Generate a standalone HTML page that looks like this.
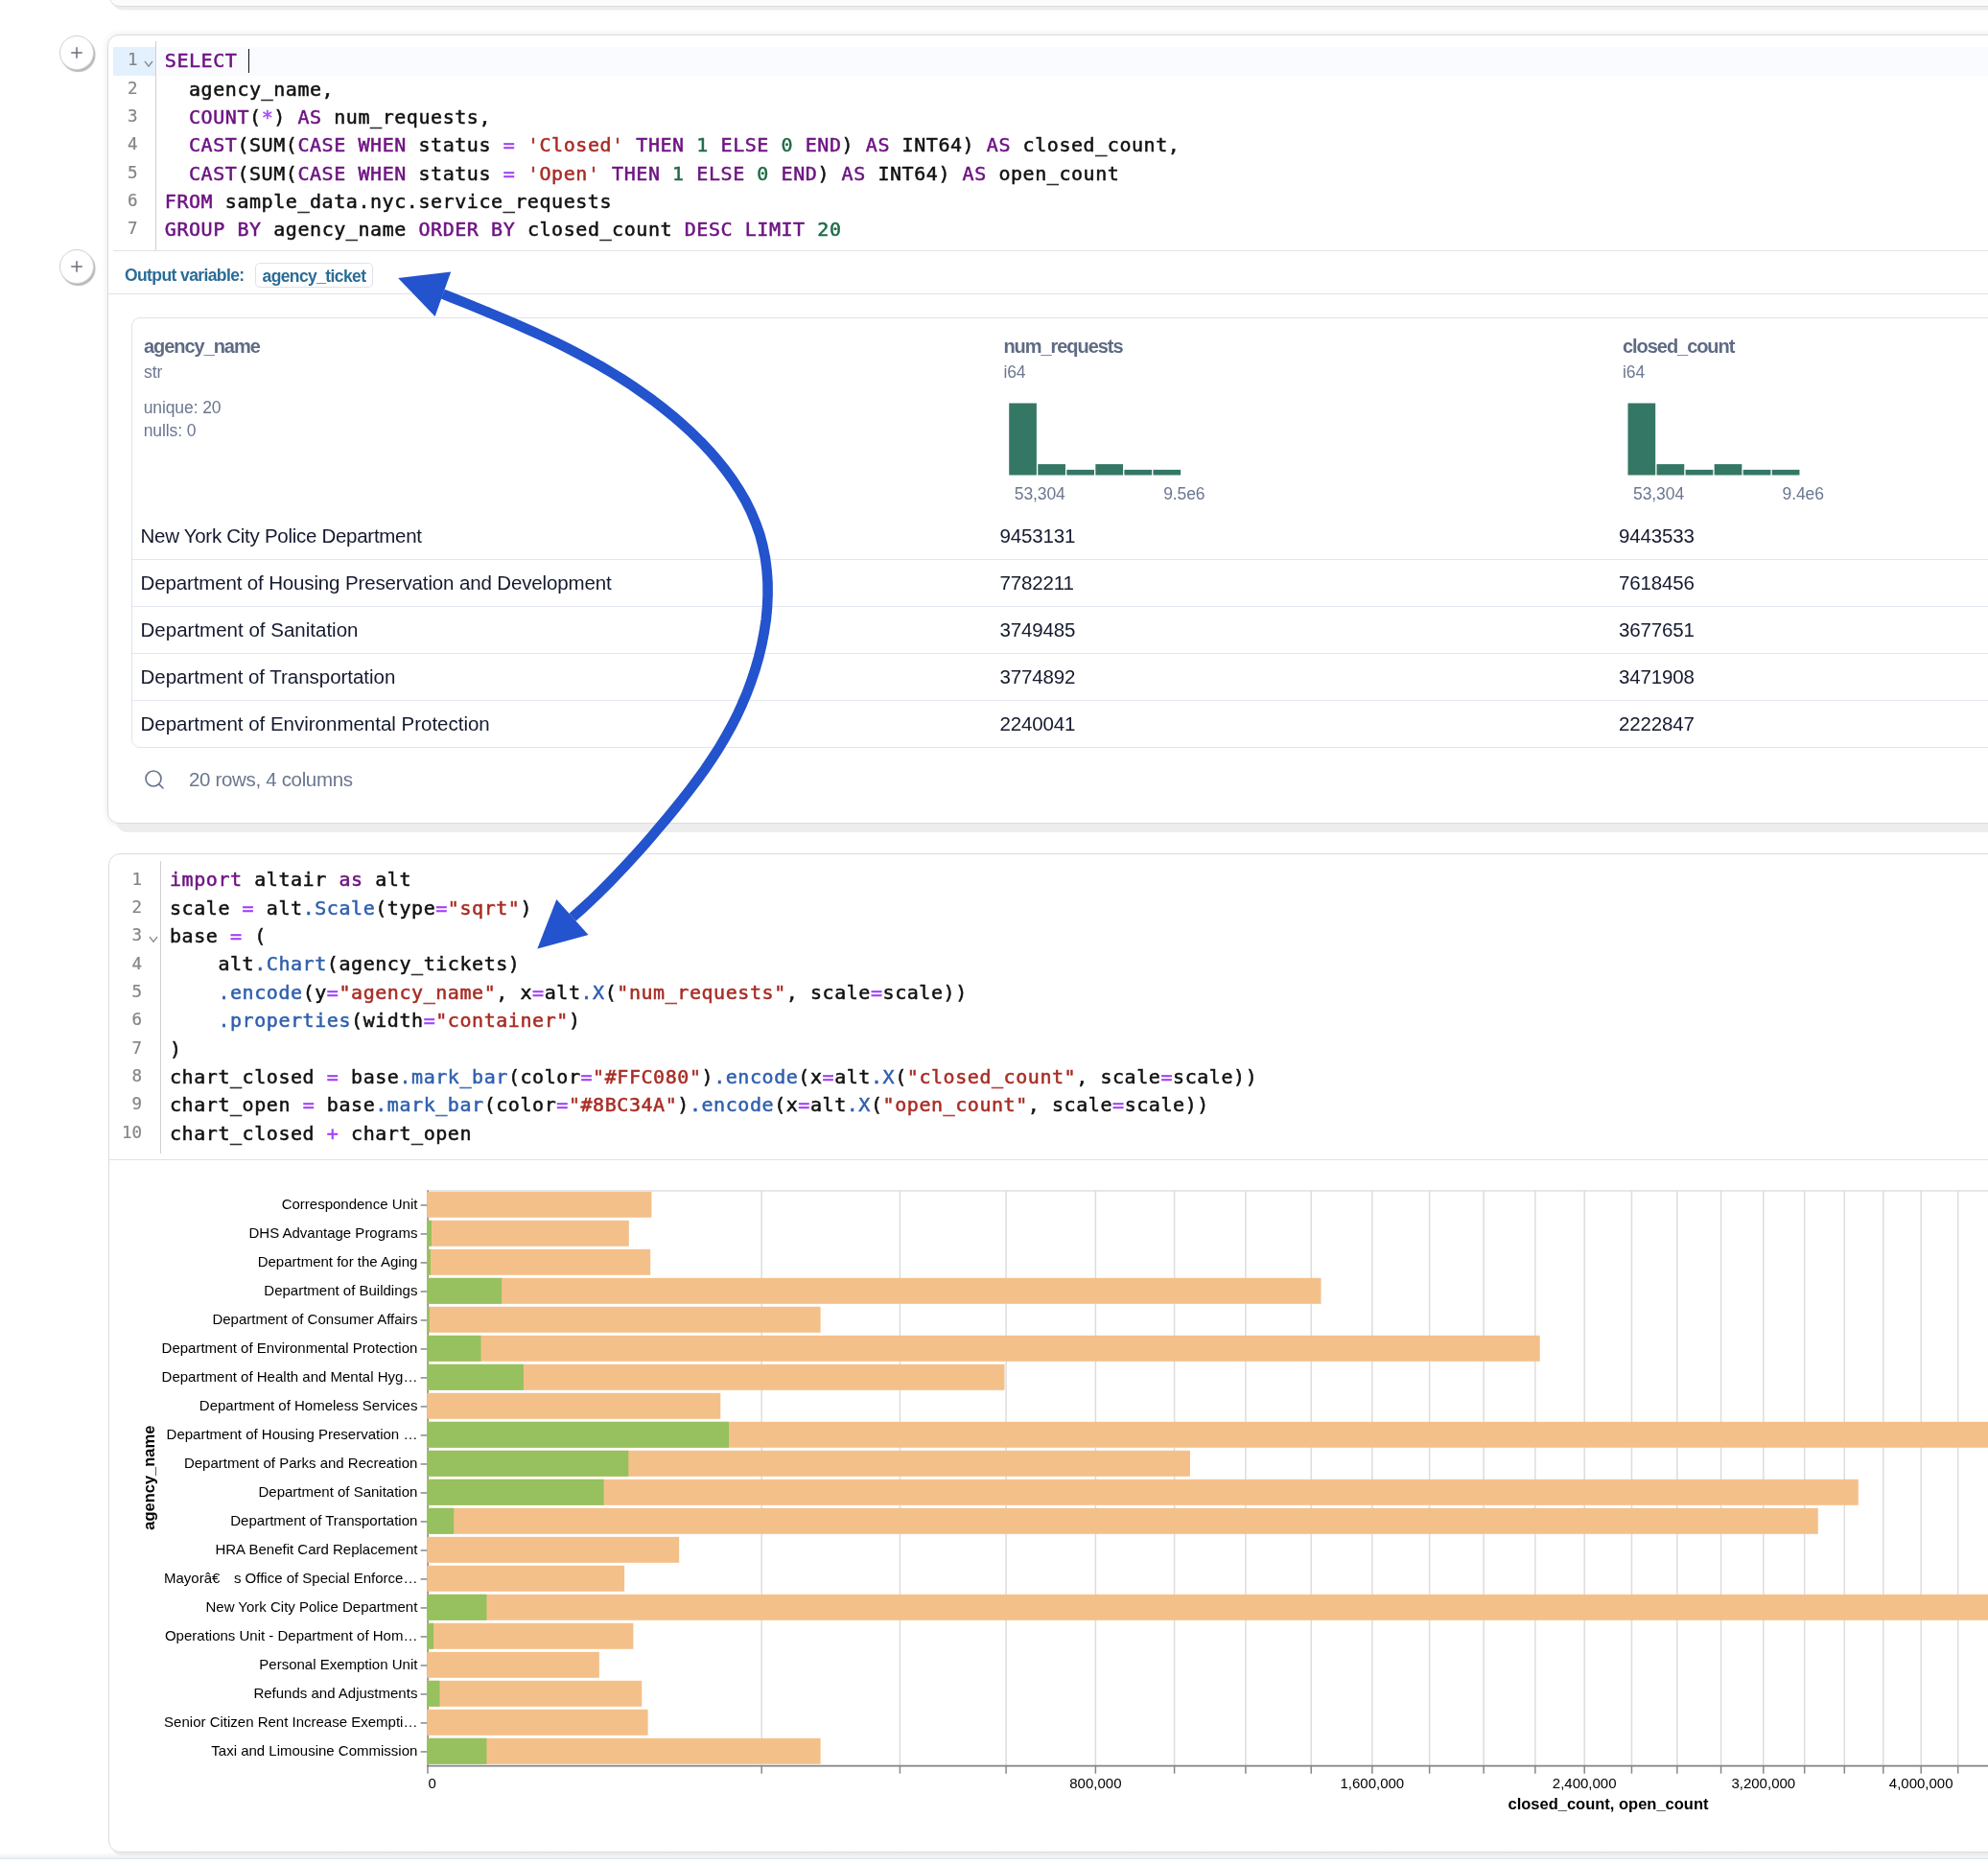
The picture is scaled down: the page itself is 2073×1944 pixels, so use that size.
<!DOCTYPE html>
<html><head><meta charset="utf-8"><title>notebook</title>
<style>
html,body{margin:0;padding:0;background:#fff;}
body{width:2073px;height:1944px;position:relative;overflow:hidden;font-family:"Liberation Sans", sans-serif;}
.abs{position:absolute;}
div{box-sizing:border-box;}
.cell{position:absolute;background:#fff;border:1px solid #dcdcdc;border-radius:12px;}
.ln{position:absolute;text-align:right;font-family:"DejaVu Sans Mono", "Liberation Mono", monospace;font-size:17.5px;line-height:29.35px;height:29.35px;color:#858585;margin-top:-0.9px;-webkit-text-stroke:0.2px;white-space:pre;}
.cl{position:absolute;font-family:"DejaVu Sans Mono", "Liberation Mono", monospace;font-size:20px;letter-spacing:0.56px;line-height:29.35px;height:29.35px;color:#111;white-space:pre;-webkit-text-stroke:0.5px;}
.k{color:#6e1483;}
.o{color:#a545f8;}
.s{color:#a82c24;}
.n{color:#1e6b46;}
.f{color:#2f5fae;}
.hline{position:absolute;height:1px;background:#e2e2e2;}
.plus{position:absolute;width:36px;height:36px;border-radius:50%;border:1px solid #cfcfd6;background:#fff;box-shadow:1.5px 2px 1px 0 #b9b9b9;}
.pt{position:absolute;white-space:pre;font-family:"Liberation Sans", sans-serif;}
.row{position:absolute;font-size:20.5px;color:#141a2e;white-space:pre;line-height:30px;height:30px;letter-spacing:-0.15px;}
.hd{position:absolute;font-weight:bold;font-size:20px;color:#5f6b85;white-space:pre;line-height:26px;letter-spacing:-1.05px;}
.sm{position:absolute;font-size:17.5px;color:#6b7790;white-space:pre;line-height:22px;letter-spacing:-0.1px;}
</style></head><body><div id="root" style="position:absolute;left:0;top:0;width:2073px;height:1944px;will-change:transform;">

<div class="cell" style="left:113px;top:-60px;width:2200px;height:67px;background:#fcfcfc;box-shadow:3px 3.5px 0 0 #ececec;"></div>
<div class="cell" style="left:112.2px;top:36.3px;width:2200px;height:822.5px;box-shadow:9px 9px 0 0 #ededed, 0 0 7px 0 rgba(0,0,0,0.10);"></div>
<div class="abs" style="left:118px;top:49.2px;width:44.5px;height:29.4px;background:#e3f0fd;"></div>
<div class="abs" style="left:163.5px;top:49.2px;width:2000px;height:29.4px;background:#fafbfe;"></div>
<div class="abs" style="left:162px;top:43.2px;width:1.2px;height:218px;background:#cfcfcf;"></div>
<div class="ln" style="left:83.5px;top:49.20px;width:60px">1</div><svg class="abs" style="left:150px;top:61.70px" width="10" height="10" viewBox="0 0 10 10"><path d="M1 2 L5 7.2 L9 2" fill="none" stroke="#8a8a8a" stroke-width="1.3"/></svg><div class="cl" style="left:171.8px;top:49.20px"><span class="k">SELECT</span><span class="t"> </span></div><div class="ln" style="left:83.5px;top:78.55px;width:60px">2</div><div class="cl" style="left:171.8px;top:78.55px"><span class="t">  agency_name,</span></div><div class="ln" style="left:83.5px;top:107.90px;width:60px">3</div><div class="cl" style="left:171.8px;top:107.90px"><span class="t">  </span><span class="k">COUNT</span><span class="t">(</span><span class="o">*</span><span class="t">) </span><span class="k">AS</span><span class="t"> num_requests,</span></div><div class="ln" style="left:83.5px;top:137.25px;width:60px">4</div><div class="cl" style="left:171.8px;top:137.25px"><span class="t">  </span><span class="k">CAST</span><span class="t">(SUM(</span><span class="k">CASE</span><span class="t"> </span><span class="k">WHEN</span><span class="t"> status </span><span class="o">=</span><span class="t"> </span><span class="s">&#x27;Closed&#x27;</span><span class="t"> </span><span class="k">THEN</span><span class="t"> </span><span class="n">1</span><span class="t"> </span><span class="k">ELSE</span><span class="t"> </span><span class="n">0</span><span class="t"> </span><span class="k">END</span><span class="t">) </span><span class="k">AS</span><span class="t"> INT64) </span><span class="k">AS</span><span class="t"> closed_count,</span></div><div class="ln" style="left:83.5px;top:166.60px;width:60px">5</div><div class="cl" style="left:171.8px;top:166.60px"><span class="t">  </span><span class="k">CAST</span><span class="t">(SUM(</span><span class="k">CASE</span><span class="t"> </span><span class="k">WHEN</span><span class="t"> status </span><span class="o">=</span><span class="t"> </span><span class="s">&#x27;Open&#x27;</span><span class="t"> </span><span class="k">THEN</span><span class="t"> </span><span class="n">1</span><span class="t"> </span><span class="k">ELSE</span><span class="t"> </span><span class="n">0</span><span class="t"> </span><span class="k">END</span><span class="t">) </span><span class="k">AS</span><span class="t"> INT64) </span><span class="k">AS</span><span class="t"> open_count</span></div><div class="ln" style="left:83.5px;top:195.95px;width:60px">6</div><div class="cl" style="left:171.8px;top:195.95px"><span class="k">FROM</span><span class="t"> sample_data.nyc.service_requests</span></div><div class="ln" style="left:83.5px;top:225.30px;width:60px">7</div><div class="cl" style="left:171.8px;top:225.30px"><span class="k">GROUP</span><span class="t"> </span><span class="k">BY</span><span class="t"> agency_name </span><span class="k">ORDER</span><span class="t"> </span><span class="k">BY</span><span class="t"> closed_count </span><span class="k">DESC</span><span class="t"> </span><span class="k">LIMIT</span><span class="t"> </span><span class="n">20</span></div>
<div class="abs" style="left:259px;top:50.5px;width:1.3px;height:25px;background:#111;"></div>
<div class="hline" style="left:118px;top:260.8px;width:2000px;"></div>
<div class="pt" style="left:130px;top:274px;font-size:17.5px;font-weight:bold;color:#2b6c96;line-height:26px;letter-spacing:-0.6px;">Output variable:</div>
<div class="abs" style="left:266px;top:274px;width:123px;height:25.5px;border:1px solid #dde2ec;border-radius:5px;background:#fff;"><div class="abs" style="left:0;top:0;width:115px;height:23.5px;overflow:hidden;"><div class="pt" style="left:6.5px;top:0.5px;font-size:17.5px;font-weight:bold;color:#2b6c96;line-height:24px;letter-spacing:-0.6px;">agency_tickets</div></div></div>
<div class="hline" style="left:113px;top:305.8px;width:2000px;"></div>
<div class="plus" style="left:62.3px;top:37px;"></div>
<svg class="abs" style="left:72.3px;top:47px" width="16" height="16" viewBox="0 0 16 16"><path d="M2.2 8 H13.8 M8 2.2 V13.8" stroke="#6a6f78" stroke-width="1.5" fill="none"/></svg>
<div class="plus" style="left:62.3px;top:260px;"></div>
<svg class="abs" style="left:72.3px;top:270px" width="16" height="16" viewBox="0 0 16 16"><path d="M2.2 8 H13.8 M8 2.2 V13.8" stroke="#6a6f78" stroke-width="1.5" fill="none"/></svg>
<div class="abs" style="left:137px;top:331px;width:2100px;height:449px;border:1px solid #dfe3ec;border-radius:9px;background:#fff;"></div>
<div class="hd" style="left:150px;top:348px;">agency_name</div>
<div class="sm" style="left:150px;top:377px;">str</div>
<div class="sm" style="left:149.7px;top:414px;">unique: 20</div>
<div class="sm" style="left:149.7px;top:437.5px;">nulls: 0</div>
<div class="row" style="left:146.5px;top:543.6px;letter-spacing:-0.28px;">New York City Police Department</div>
<div class="row" style="left:1042.5px;top:543.6px;">9453131</div>
<div class="row" style="left:1688px;top:543.6px;">9443533</div>
<div class="hline" style="left:138px;top:582.6px;width:2000px;background:#e1e6ef;"></div>
<div class="row" style="left:146.5px;top:592.6px;letter-spacing:-0.14px;">Department of Housing Preservation and Development</div>
<div class="row" style="left:1042.5px;top:592.6px;">7782211</div>
<div class="row" style="left:1688px;top:592.6px;">7618456</div>
<div class="hline" style="left:138px;top:631.6px;width:2000px;background:#e1e6ef;"></div>
<div class="row" style="left:146.5px;top:641.6px;letter-spacing:0.01px;">Department of Sanitation</div>
<div class="row" style="left:1042.5px;top:641.6px;">3749485</div>
<div class="row" style="left:1688px;top:641.6px;">3677651</div>
<div class="hline" style="left:138px;top:680.6px;width:2000px;background:#e1e6ef;"></div>
<div class="row" style="left:146.5px;top:690.6px;letter-spacing:-0.03px;">Department of Transportation</div>
<div class="row" style="left:1042.5px;top:690.6px;">3774892</div>
<div class="row" style="left:1688px;top:690.6px;">3471908</div>
<div class="hline" style="left:138px;top:729.6px;width:2000px;background:#e1e6ef;"></div>
<div class="row" style="left:146.5px;top:739.6px;letter-spacing:-0.01px;">Department of Environmental Protection</div>
<div class="row" style="left:1042.5px;top:739.6px;">2240041</div>
<div class="row" style="left:1688px;top:739.6px;">2222847</div>
<div class="hd" style="left:1046.4px;top:348px;">num_requests</div>
<div class="sm" style="left:1046.4px;top:377px;">i64</div>
<svg class="abs" style="left:0;top:400px" width="2073" height="110" viewBox="0 400 2073 110"><rect x="1052.20" y="420.50" width="28.7" height="75" fill="#347765"/><rect x="1082.25" y="484.10" width="28.7" height="11.4" fill="#347765"/><rect x="1112.30" y="489.90" width="28.7" height="5.6" fill="#347765"/><rect x="1142.35" y="484.10" width="28.7" height="11.4" fill="#347765"/><rect x="1172.40" y="489.90" width="28.7" height="5.6" fill="#347765"/><rect x="1202.45" y="489.90" width="28.7" height="5.6" fill="#347765"/></svg><div class="sm" style="left:1057.8px;top:503.5px;">53,304</div><div class="sm" style="left:1213.2px;top:503.5px;">9.5e6</div>
<div class="hd" style="left:1692px;top:348px;">closed_count</div>
<div class="sm" style="left:1692px;top:377px;">i64</div>
<svg class="abs" style="left:0;top:400px" width="2073" height="110" viewBox="0 400 2073 110"><rect x="1697.50" y="420.50" width="28.7" height="75" fill="#347765"/><rect x="1727.55" y="484.10" width="28.7" height="11.4" fill="#347765"/><rect x="1757.60" y="489.90" width="28.7" height="5.6" fill="#347765"/><rect x="1787.65" y="484.10" width="28.7" height="11.4" fill="#347765"/><rect x="1817.70" y="489.90" width="28.7" height="5.6" fill="#347765"/><rect x="1847.75" y="489.90" width="28.7" height="5.6" fill="#347765"/></svg><div class="sm" style="left:1703.1px;top:503.5px;">53,304</div><div class="sm" style="left:1858.5px;top:503.5px;">9.4e6</div>
<svg class="abs" style="left:149px;top:800.5px" width="24" height="24" viewBox="0 0 24 24"><circle cx="11" cy="11" r="8" fill="none" stroke="#6b7790" stroke-width="1.7"/><path d="M16.8 16.8 L21 21" stroke="#6b7790" stroke-width="1.7" stroke-linecap="round"/></svg>
<div class="pt" style="left:197px;top:798px;font-size:20.5px;color:#6b7790;line-height:30px;letter-spacing:-0.33px;">20 rows, 4 columns</div>
<div class="cell" style="left:113px;top:890.2px;width:2200px;height:1041.5px;box-shadow:3px 3.5px 0 0 #ececec;"></div>
<div class="abs" style="left:167px;top:897.5px;width:1.2px;height:305px;background:#cfcfcf;"></div>
<div class="ln" style="left:88px;top:903.40px;width:60px">1</div><div class="cl" style="left:177.0px;top:903.40px"><span class="k">import</span><span class="t"> altair </span><span class="k">as</span><span class="t"> alt</span></div><div class="ln" style="left:88px;top:932.75px;width:60px">2</div><div class="cl" style="left:177.0px;top:932.75px"><span class="t">scale </span><span class="o">=</span><span class="t"> alt</span><span class="f">.Scale</span><span class="t">(type</span><span class="o">=</span><span class="s">&quot;sqrt&quot;</span><span class="t">)</span></div><div class="ln" style="left:88px;top:962.10px;width:60px">3</div><svg class="abs" style="left:155px;top:974.60px" width="10" height="10" viewBox="0 0 10 10"><path d="M1 2 L5 7.2 L9 2" fill="none" stroke="#8a8a8a" stroke-width="1.3"/></svg><div class="cl" style="left:177.0px;top:962.10px"><span class="t">base </span><span class="o">=</span><span class="t"> (</span></div><div class="ln" style="left:88px;top:991.45px;width:60px">4</div><div class="cl" style="left:177.0px;top:991.45px"><span class="t">    alt</span><span class="f">.Chart</span><span class="t">(agency_tickets)</span></div><div class="ln" style="left:88px;top:1020.80px;width:60px">5</div><div class="cl" style="left:177.0px;top:1020.80px"><span class="t">    </span><span class="f">.encode</span><span class="t">(y</span><span class="o">=</span><span class="s">&quot;agency_name&quot;</span><span class="t">, x</span><span class="o">=</span><span class="t">alt</span><span class="f">.X</span><span class="t">(</span><span class="s">&quot;num_requests&quot;</span><span class="t">, scale</span><span class="o">=</span><span class="t">scale))</span></div><div class="ln" style="left:88px;top:1050.15px;width:60px">6</div><div class="cl" style="left:177.0px;top:1050.15px"><span class="t">    </span><span class="f">.properties</span><span class="t">(width</span><span class="o">=</span><span class="s">&quot;container&quot;</span><span class="t">)</span></div><div class="ln" style="left:88px;top:1079.50px;width:60px">7</div><div class="cl" style="left:177.0px;top:1079.50px"><span class="t">)</span></div><div class="ln" style="left:88px;top:1108.85px;width:60px">8</div><div class="cl" style="left:177.0px;top:1108.85px"><span class="t">chart_closed </span><span class="o">=</span><span class="t"> base</span><span class="f">.mark_bar</span><span class="t">(color</span><span class="o">=</span><span class="s">&quot;#FFC080&quot;</span><span class="t">)</span><span class="f">.encode</span><span class="t">(x</span><span class="o">=</span><span class="t">alt</span><span class="f">.X</span><span class="t">(</span><span class="s">&quot;closed_count&quot;</span><span class="t">, scale</span><span class="o">=</span><span class="t">scale))</span></div><div class="ln" style="left:88px;top:1138.20px;width:60px">9</div><div class="cl" style="left:177.0px;top:1138.20px"><span class="t">chart_open </span><span class="o">=</span><span class="t"> base</span><span class="f">.mark_bar</span><span class="t">(color</span><span class="o">=</span><span class="s">&quot;#8BC34A&quot;</span><span class="t">)</span><span class="f">.encode</span><span class="t">(x</span><span class="o">=</span><span class="t">alt</span><span class="f">.X</span><span class="t">(</span><span class="s">&quot;open_count&quot;</span><span class="t">, scale</span><span class="o">=</span><span class="t">scale))</span></div><div class="ln" style="left:88px;top:1167.55px;width:60px">10</div><div class="cl" style="left:177.0px;top:1167.55px"><span class="t">chart_closed </span><span class="o">+</span><span class="t"> chart_open</span></div>
<div class="hline" style="left:114px;top:1209px;width:2000px;"></div>
<svg class="abs" style="left:0;top:0" width="2073" height="1944" viewBox="0 0 2073 1944" font-family='"Liberation Sans", sans-serif'><rect x="446.0" y="1241.95" width="2465" height="600" fill="none" stroke="#ddd" stroke-width="1.4"/><line x1="794.20" x2="794.20" y1="1241.95" y2="1841.95" stroke="#ddd" stroke-width="1.5"/><line x1="938.43" x2="938.43" y1="1241.95" y2="1841.95" stroke="#ddd" stroke-width="1.5"/><line x1="1049.10" x2="1049.10" y1="1241.95" y2="1841.95" stroke="#ddd" stroke-width="1.5"/><line x1="1142.40" x2="1142.40" y1="1241.95" y2="1841.95" stroke="#ddd" stroke-width="1.5"/><line x1="1224.60" x2="1224.60" y1="1241.95" y2="1841.95" stroke="#ddd" stroke-width="1.5"/><line x1="1298.91" x2="1298.91" y1="1241.95" y2="1841.95" stroke="#ddd" stroke-width="1.5"/><line x1="1367.25" x2="1367.25" y1="1241.95" y2="1841.95" stroke="#ddd" stroke-width="1.5"/><line x1="1430.86" x2="1430.86" y1="1241.95" y2="1841.95" stroke="#ddd" stroke-width="1.5"/><line x1="1490.60" x2="1490.60" y1="1241.95" y2="1841.95" stroke="#ddd" stroke-width="1.5"/><line x1="1547.11" x2="1547.11" y1="1241.95" y2="1841.95" stroke="#ddd" stroke-width="1.5"/><line x1="1600.85" x2="1600.85" y1="1241.95" y2="1841.95" stroke="#ddd" stroke-width="1.5"/><line x1="1652.20" x2="1652.20" y1="1241.95" y2="1841.95" stroke="#ddd" stroke-width="1.5"/><line x1="1701.45" x2="1701.45" y1="1241.95" y2="1841.95" stroke="#ddd" stroke-width="1.5"/><line x1="1748.85" x2="1748.85" y1="1241.95" y2="1841.95" stroke="#ddd" stroke-width="1.5"/><line x1="1794.57" x2="1794.57" y1="1241.95" y2="1841.95" stroke="#ddd" stroke-width="1.5"/><line x1="1838.80" x2="1838.80" y1="1241.95" y2="1841.95" stroke="#ddd" stroke-width="1.5"/><line x1="1881.67" x2="1881.67" y1="1241.95" y2="1841.95" stroke="#ddd" stroke-width="1.5"/><line x1="1923.29" x2="1923.29" y1="1241.95" y2="1841.95" stroke="#ddd" stroke-width="1.5"/><line x1="1963.77" x2="1963.77" y1="1241.95" y2="1841.95" stroke="#ddd" stroke-width="1.5"/><line x1="2003.20" x2="2003.20" y1="1241.95" y2="1841.95" stroke="#ddd" stroke-width="1.5"/><line x1="2041.66" x2="2041.66" y1="1241.95" y2="1841.95" stroke="#ddd" stroke-width="1.5"/><line x1="2079.21" x2="2079.21" y1="1241.95" y2="1841.95" stroke="#ddd" stroke-width="1.5"/><line x1="446.2" x2="446.2" y1="1241.2" y2="1842.7" stroke="#888" stroke-width="1.5"/><rect x="445.2" y="1242.80" width="234.20" height="27" fill="#f4c08a"/><line x1="438.59999999999997" x2="445.2" y1="1256.95" y2="1256.95" stroke="#888" stroke-width="1.5"/><text x="435.4" y="1260.95" font-size="15" text-anchor="end" fill="#000">Correspondence Unit</text><rect x="445.2" y="1272.80" width="210.60" height="27" fill="#f4c08a"/><rect x="445.2" y="1272.80" width="4.70" height="27" fill="#96c15e"/><line x1="438.59999999999997" x2="445.2" y1="1286.95" y2="1286.95" stroke="#888" stroke-width="1.5"/><text x="435.4" y="1290.95" font-size="15" text-anchor="end" fill="#000">DHS Advantage Programs</text><rect x="445.2" y="1302.80" width="233.00" height="27" fill="#f4c08a"/><rect x="445.2" y="1302.80" width="3.80" height="27" fill="#96c15e"/><line x1="438.59999999999997" x2="445.2" y1="1316.95" y2="1316.95" stroke="#888" stroke-width="1.5"/><text x="435.4" y="1320.95" font-size="15" text-anchor="end" fill="#000">Department for the Aging</text><rect x="445.2" y="1332.80" width="932.30" height="27" fill="#f4c08a"/><rect x="445.2" y="1332.80" width="77.90" height="27" fill="#96c15e"/><line x1="438.59999999999997" x2="445.2" y1="1346.95" y2="1346.95" stroke="#888" stroke-width="1.5"/><text x="435.4" y="1350.95" font-size="15" text-anchor="end" fill="#000">Department of Buildings</text><rect x="445.2" y="1362.80" width="410.40" height="27" fill="#f4c08a"/><rect x="445.2" y="1362.80" width="2.70" height="27" fill="#96c15e"/><line x1="438.59999999999997" x2="445.2" y1="1376.95" y2="1376.95" stroke="#888" stroke-width="1.5"/><text x="435.4" y="1380.95" font-size="15" text-anchor="end" fill="#000">Department of Consumer Affairs</text><rect x="445.2" y="1392.80" width="1160.50" height="27" fill="#f4c08a"/><rect x="445.2" y="1392.80" width="56.30" height="27" fill="#96c15e"/><line x1="438.59999999999997" x2="445.2" y1="1406.95" y2="1406.95" stroke="#888" stroke-width="1.5"/><text x="435.4" y="1410.95" font-size="15" text-anchor="end" fill="#000">Department of Environmental Protection</text><rect x="445.2" y="1422.80" width="602.30" height="27" fill="#f4c08a"/><rect x="445.2" y="1422.80" width="100.70" height="27" fill="#96c15e"/><line x1="438.59999999999997" x2="445.2" y1="1436.95" y2="1436.95" stroke="#888" stroke-width="1.5"/><text x="435.4" y="1440.95" font-size="15" text-anchor="end" fill="#000">Department of Health and Mental Hyg…</text><rect x="445.2" y="1452.80" width="306.10" height="27" fill="#f4c08a"/><line x1="438.59999999999997" x2="445.2" y1="1466.95" y2="1466.95" stroke="#888" stroke-width="1.5"/><text x="435.4" y="1470.95" font-size="15" text-anchor="end" fill="#000">Department of Homeless Services</text><rect x="445.2" y="1482.80" width="1934.80" height="27" fill="#f4c08a"/><rect x="445.2" y="1482.80" width="314.90" height="27" fill="#96c15e"/><line x1="438.59999999999997" x2="445.2" y1="1496.95" y2="1496.95" stroke="#888" stroke-width="1.5"/><text x="435.4" y="1500.95" font-size="15" text-anchor="end" fill="#000">Department of Housing Preservation …</text><rect x="445.2" y="1512.80" width="795.80" height="27" fill="#f4c08a"/><rect x="445.2" y="1512.80" width="210.10" height="27" fill="#96c15e"/><line x1="438.59999999999997" x2="445.2" y1="1526.95" y2="1526.95" stroke="#888" stroke-width="1.5"/><text x="435.4" y="1530.95" font-size="15" text-anchor="end" fill="#000">Department of Parks and Recreation</text><rect x="445.2" y="1542.80" width="1492.60" height="27" fill="#f4c08a"/><rect x="445.2" y="1542.80" width="184.40" height="27" fill="#96c15e"/><line x1="438.59999999999997" x2="445.2" y1="1556.95" y2="1556.95" stroke="#888" stroke-width="1.5"/><text x="435.4" y="1560.95" font-size="15" text-anchor="end" fill="#000">Department of Sanitation</text><rect x="445.2" y="1572.80" width="1450.60" height="27" fill="#f4c08a"/><rect x="445.2" y="1572.80" width="28.00" height="27" fill="#96c15e"/><line x1="438.59999999999997" x2="445.2" y1="1586.95" y2="1586.95" stroke="#888" stroke-width="1.5"/><text x="435.4" y="1590.95" font-size="15" text-anchor="end" fill="#000">Department of Transportation</text><rect x="445.2" y="1602.80" width="263.00" height="27" fill="#f4c08a"/><line x1="438.59999999999997" x2="445.2" y1="1616.95" y2="1616.95" stroke="#888" stroke-width="1.5"/><text x="435.4" y="1620.95" font-size="15" text-anchor="end" fill="#000">HRA Benefit Card Replacement</text><rect x="445.2" y="1632.80" width="205.90" height="27" fill="#f4c08a"/><line x1="438.59999999999997" x2="445.2" y1="1646.95" y2="1646.95" stroke="#888" stroke-width="1.5"/><text x="435.4" y="1650.95" font-size="15" text-anchor="end" fill="#000">Mayorâ€<tspan dx="14.6">s Office of Special Enforce…</tspan></text><rect x="445.2" y="1662.80" width="2394.80" height="27" fill="#f4c08a"/><rect x="445.2" y="1662.80" width="62.30" height="27" fill="#96c15e"/><line x1="438.59999999999997" x2="445.2" y1="1676.95" y2="1676.95" stroke="#888" stroke-width="1.5"/><text x="435.4" y="1680.95" font-size="15" text-anchor="end" fill="#000">New York City Police Department</text><rect x="445.2" y="1692.80" width="215.20" height="27" fill="#f4c08a"/><rect x="445.2" y="1692.80" width="6.90" height="27" fill="#96c15e"/><line x1="438.59999999999997" x2="445.2" y1="1706.95" y2="1706.95" stroke="#888" stroke-width="1.5"/><text x="435.4" y="1710.95" font-size="15" text-anchor="end" fill="#000">Operations Unit - Department of Hom…</text><rect x="445.2" y="1722.80" width="179.70" height="27" fill="#f4c08a"/><line x1="438.59999999999997" x2="445.2" y1="1736.95" y2="1736.95" stroke="#888" stroke-width="1.5"/><text x="435.4" y="1740.95" font-size="15" text-anchor="end" fill="#000">Personal Exemption Unit</text><rect x="445.2" y="1752.80" width="224.10" height="27" fill="#f4c08a"/><rect x="445.2" y="1752.80" width="13.30" height="27" fill="#96c15e"/><line x1="438.59999999999997" x2="445.2" y1="1766.95" y2="1766.95" stroke="#888" stroke-width="1.5"/><text x="435.4" y="1770.95" font-size="15" text-anchor="end" fill="#000">Refunds and Adjustments</text><rect x="445.2" y="1782.80" width="230.40" height="27" fill="#f4c08a"/><line x1="438.59999999999997" x2="445.2" y1="1796.95" y2="1796.95" stroke="#888" stroke-width="1.5"/><text x="435.4" y="1800.95" font-size="15" text-anchor="end" fill="#000">Senior Citizen Rent Increase Exempti…</text><rect x="445.2" y="1812.80" width="410.40" height="27" fill="#f4c08a"/><rect x="445.2" y="1812.80" width="62.30" height="27" fill="#96c15e"/><line x1="438.59999999999997" x2="445.2" y1="1826.95" y2="1826.95" stroke="#888" stroke-width="1.5"/><text x="435.4" y="1830.95" font-size="15" text-anchor="end" fill="#000">Taxi and Limousine Commission</text><line x1="445.2" x2="2100" y1="1841.7" y2="1841.7" stroke="#888" stroke-width="1.7"/><line x1="446.00" x2="446.00" y1="1841.2" y2="1849.7" stroke="#888" stroke-width="1.5"/><line x1="794.20" x2="794.20" y1="1841.2" y2="1849.7" stroke="#888" stroke-width="1.5"/><line x1="938.43" x2="938.43" y1="1841.2" y2="1849.7" stroke="#888" stroke-width="1.5"/><line x1="1049.10" x2="1049.10" y1="1841.2" y2="1849.7" stroke="#888" stroke-width="1.5"/><line x1="1142.40" x2="1142.40" y1="1841.2" y2="1849.7" stroke="#888" stroke-width="1.5"/><line x1="1224.60" x2="1224.60" y1="1841.2" y2="1849.7" stroke="#888" stroke-width="1.5"/><line x1="1298.91" x2="1298.91" y1="1841.2" y2="1849.7" stroke="#888" stroke-width="1.5"/><line x1="1367.25" x2="1367.25" y1="1841.2" y2="1849.7" stroke="#888" stroke-width="1.5"/><line x1="1430.86" x2="1430.86" y1="1841.2" y2="1849.7" stroke="#888" stroke-width="1.5"/><line x1="1490.60" x2="1490.60" y1="1841.2" y2="1849.7" stroke="#888" stroke-width="1.5"/><line x1="1547.11" x2="1547.11" y1="1841.2" y2="1849.7" stroke="#888" stroke-width="1.5"/><line x1="1600.85" x2="1600.85" y1="1841.2" y2="1849.7" stroke="#888" stroke-width="1.5"/><line x1="1652.20" x2="1652.20" y1="1841.2" y2="1849.7" stroke="#888" stroke-width="1.5"/><line x1="1701.45" x2="1701.45" y1="1841.2" y2="1849.7" stroke="#888" stroke-width="1.5"/><line x1="1748.85" x2="1748.85" y1="1841.2" y2="1849.7" stroke="#888" stroke-width="1.5"/><line x1="1794.57" x2="1794.57" y1="1841.2" y2="1849.7" stroke="#888" stroke-width="1.5"/><line x1="1838.80" x2="1838.80" y1="1841.2" y2="1849.7" stroke="#888" stroke-width="1.5"/><line x1="1881.67" x2="1881.67" y1="1841.2" y2="1849.7" stroke="#888" stroke-width="1.5"/><line x1="1923.29" x2="1923.29" y1="1841.2" y2="1849.7" stroke="#888" stroke-width="1.5"/><line x1="1963.77" x2="1963.77" y1="1841.2" y2="1849.7" stroke="#888" stroke-width="1.5"/><line x1="2003.20" x2="2003.20" y1="1841.2" y2="1849.7" stroke="#888" stroke-width="1.5"/><line x1="2041.66" x2="2041.66" y1="1841.2" y2="1849.7" stroke="#888" stroke-width="1.5"/><line x1="2079.21" x2="2079.21" y1="1841.2" y2="1849.7" stroke="#888" stroke-width="1.5"/><text x="446.4" y="1864.8" font-size="15" text-anchor="start" fill="#000">0</text><text x="1142.40" y="1864.8" font-size="15" text-anchor="middle" fill="#000">800,000</text><text x="1430.86" y="1864.8" font-size="15" text-anchor="middle" fill="#000">1,600,000</text><text x="1652.20" y="1864.8" font-size="15" text-anchor="middle" fill="#000">2,400,000</text><text x="1838.80" y="1864.8" font-size="15" text-anchor="middle" fill="#000">3,200,000</text><text x="2003.20" y="1864.8" font-size="15" text-anchor="middle" fill="#000">4,000,000</text><text x="1677" y="1887" font-size="16.5" font-weight="bold" text-anchor="middle" fill="#000">closed_count, open_count</text><text transform="translate(161,1541.2) rotate(-90)" font-size="16.5" font-weight="bold" text-anchor="middle" fill="#000">agency_name</text></svg>
<svg class="abs" style="left:0;top:0" width="2073" height="1944" viewBox="0 0 2073 1944">
<polyline points="461.8,306.6 474.0,311.5 486.2,316.4 498.3,321.3 510.4,326.3 522.4,331.3 534.3,336.4 546.1,341.6 557.9,346.9 569.6,352.3 581.1,357.8 592.6,363.6 604.0,369.5 615.3,375.6 626.5,381.9 637.6,388.5 648.6,395.3 659.5,402.4 670.2,409.8 680.8,417.4 691.3,425.5 701.6,433.8 711.6,442.5 721.4,451.4 730.8,460.7 739.9,470.3 748.5,480.2 756.6,490.4 764.2,500.9 771.2,511.6 777.6,522.7 783.2,534.0 788.1,545.7 792.3,557.5 795.5,569.7 798.0,582.1 799.6,594.7 800.5,607.5 800.6,620.3 800.0,633.3 798.8,646.3 796.8,659.3 794.3,672.3 791.2,685.2 787.5,698.0 783.3,710.6 778.7,723.0 773.5,735.2 768.0,747.1 762.0,758.7 755.7,770.0 749.1,781.1 742.1,791.9 734.9,802.5 727.4,812.9 719.7,823.1 711.8,833.3 703.7,843.3 695.5,853.3 687.2,863.2 678.8,873.1 670.2,882.9 661.6,892.6 652.8,902.2 643.8,911.7 634.8,921.0 625.5,930.2 616.2,939.2 606.7,948.0 597.0,956.6" fill="none" stroke="#2353cd" stroke-width="10.6" stroke-linejoin="round"/>
<polygon points="415.1,290.1 470.2,283.6 453.6,330.1" fill="#2353cd"/>
<polygon points="560.3,989.5 580.3,938 613.5,974.9" fill="#2353cd"/>
</svg>
<div class="abs" style="left:0;top:1932px;width:2073px;height:6px;background:linear-gradient(to bottom, rgba(235,238,242,0), rgba(235,238,242,0.9));"></div>
<div class="abs" style="left:0;top:1937.5px;width:2073px;height:1.2px;background:#dfe5ec;"></div>
<div class="abs" style="left:0;top:1938.7px;width:2073px;height:6px;background:#fff;"></div>
</div></body></html>
